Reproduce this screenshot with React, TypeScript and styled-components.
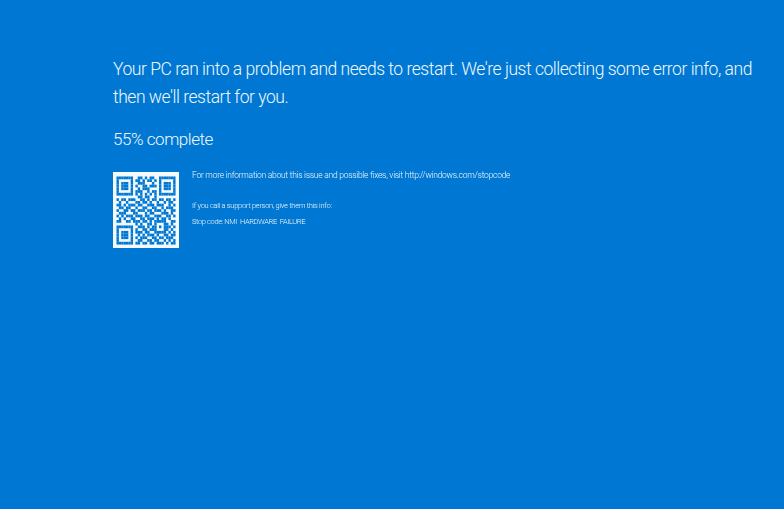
import React from 'react';
import styled, { createGlobalStyle } from 'styled-components';

const GlobalStyle = createGlobalStyle`
  html, body {
    margin: 0;
    padding: 0;
    background: #0078d3;
  }
`

const Screen = styled.div`
  width: 784px;
  height: 509px;
  box-sizing: border-box;
  overflow: hidden;
  padding: 55px 0 0 113px;
  background: #0078d3;
  color: #f1f8fd;
  font-family: Roboto, "Liberation Sans", sans-serif;
  font-weight: 300;
`

const Message = styled.p`
  margin: 0;
  width: 650px;
  font-size: 17.5px;
  line-height: 28px;
  letter-spacing: -0.47px;
`

const Progress = styled.p`
  margin: 14px 0 0;
  font-size: 17px;
  line-height: 28px;
  letter-spacing: -0.45px;
`

const Details = styled.div`
  display: flex;
  gap: 13px;
  margin-top: 19px;
`

const QrCode = styled.svg`
  display: block;
  width: 66px;
  height: 76px;
`

const InfoColumn = styled.div`
  margin-top: -3px;
  line-height: 12px;
  filter: blur(0.25px);
`

const InfoLine = styled.div<{ $gap?: number; $size: number; $spacing: number }>`
  margin-top: ${p => p.$gap || 0}px;
  font-size: ${p => p.$size}px;
  letter-spacing: ${p => p.$spacing}px;
  white-space: pre;
`

const QR_ROWS = [
  '1111111001101011001111111',
  '1000001011010110101000001',
  '1011101001110001001011101',
  '1011101010011011101011101',
  '1011101001011100001011101',
  '1000001011100101101000001',
  '1111111010101010101111111',
  '0000000001101100100000000',
  '1011011100110101101101101',
  '0100100011011010010010110',
  '1101011101100111011100101',
  '0110110010011001100101110',
  '1001101101110110111010011',
  '0111000110001011000111010',
  '1010111011101100111001101',
  '0101001100110111010110100',
  '1100110111011010111110011',
  '0000000010100110100011010',
  '1111111001110101101011101',
  '1000001010011011100011010',
  '1011101011101100111110101',
  '1011101001010111010011011',
  '1011101010111001101101110',
  '1000001001100110110010101',
  '1111111011011011011101011',
];

const QrGraphic: React.FC = () => (
  <QrCode viewBox="0 0 66 76">
    <rect width="66" height="76" fill="#f4f9fd" />
    <g fill="#0078d3" transform="translate(3.5 4.5) scale(2.36 2.72)">
      {QR_ROWS.map((row, y) =>
        row.split('').map((cell, x) =>
          cell === '1' ? <rect key={`${x}-${y}`} x={x} y={y} width="1.02" height="1.02" /> : null
        )
      )}
    </g>
  </QrCode>
);

function App() {
  return (
    <Screen>
      <GlobalStyle />
      <Message>
        Your PC ran into a problem and needs to restart. We're just collecting some error info, and then we'll restart for you.
      </Message>
      <Progress>55% complete</Progress>
      <Details>
        <QrGraphic />
        <InfoColumn>
          <InfoLine $size={8.5} $spacing={-0.26}>For more information about this issue and possible fixes, visit http://windows.com/stopcode</InfoLine>
          <InfoLine $gap={19} $size={7.5} $spacing={-0.29}>If you call a support person, give them this info:</InfoLine>
          <InfoLine $gap={4} $size={7.5} $spacing={-0.38}>Stop code: NMI  HARDWARE  FAILURE</InfoLine>
        </InfoColumn>
      </Details>
    </Screen>
  );
}
export default App;
